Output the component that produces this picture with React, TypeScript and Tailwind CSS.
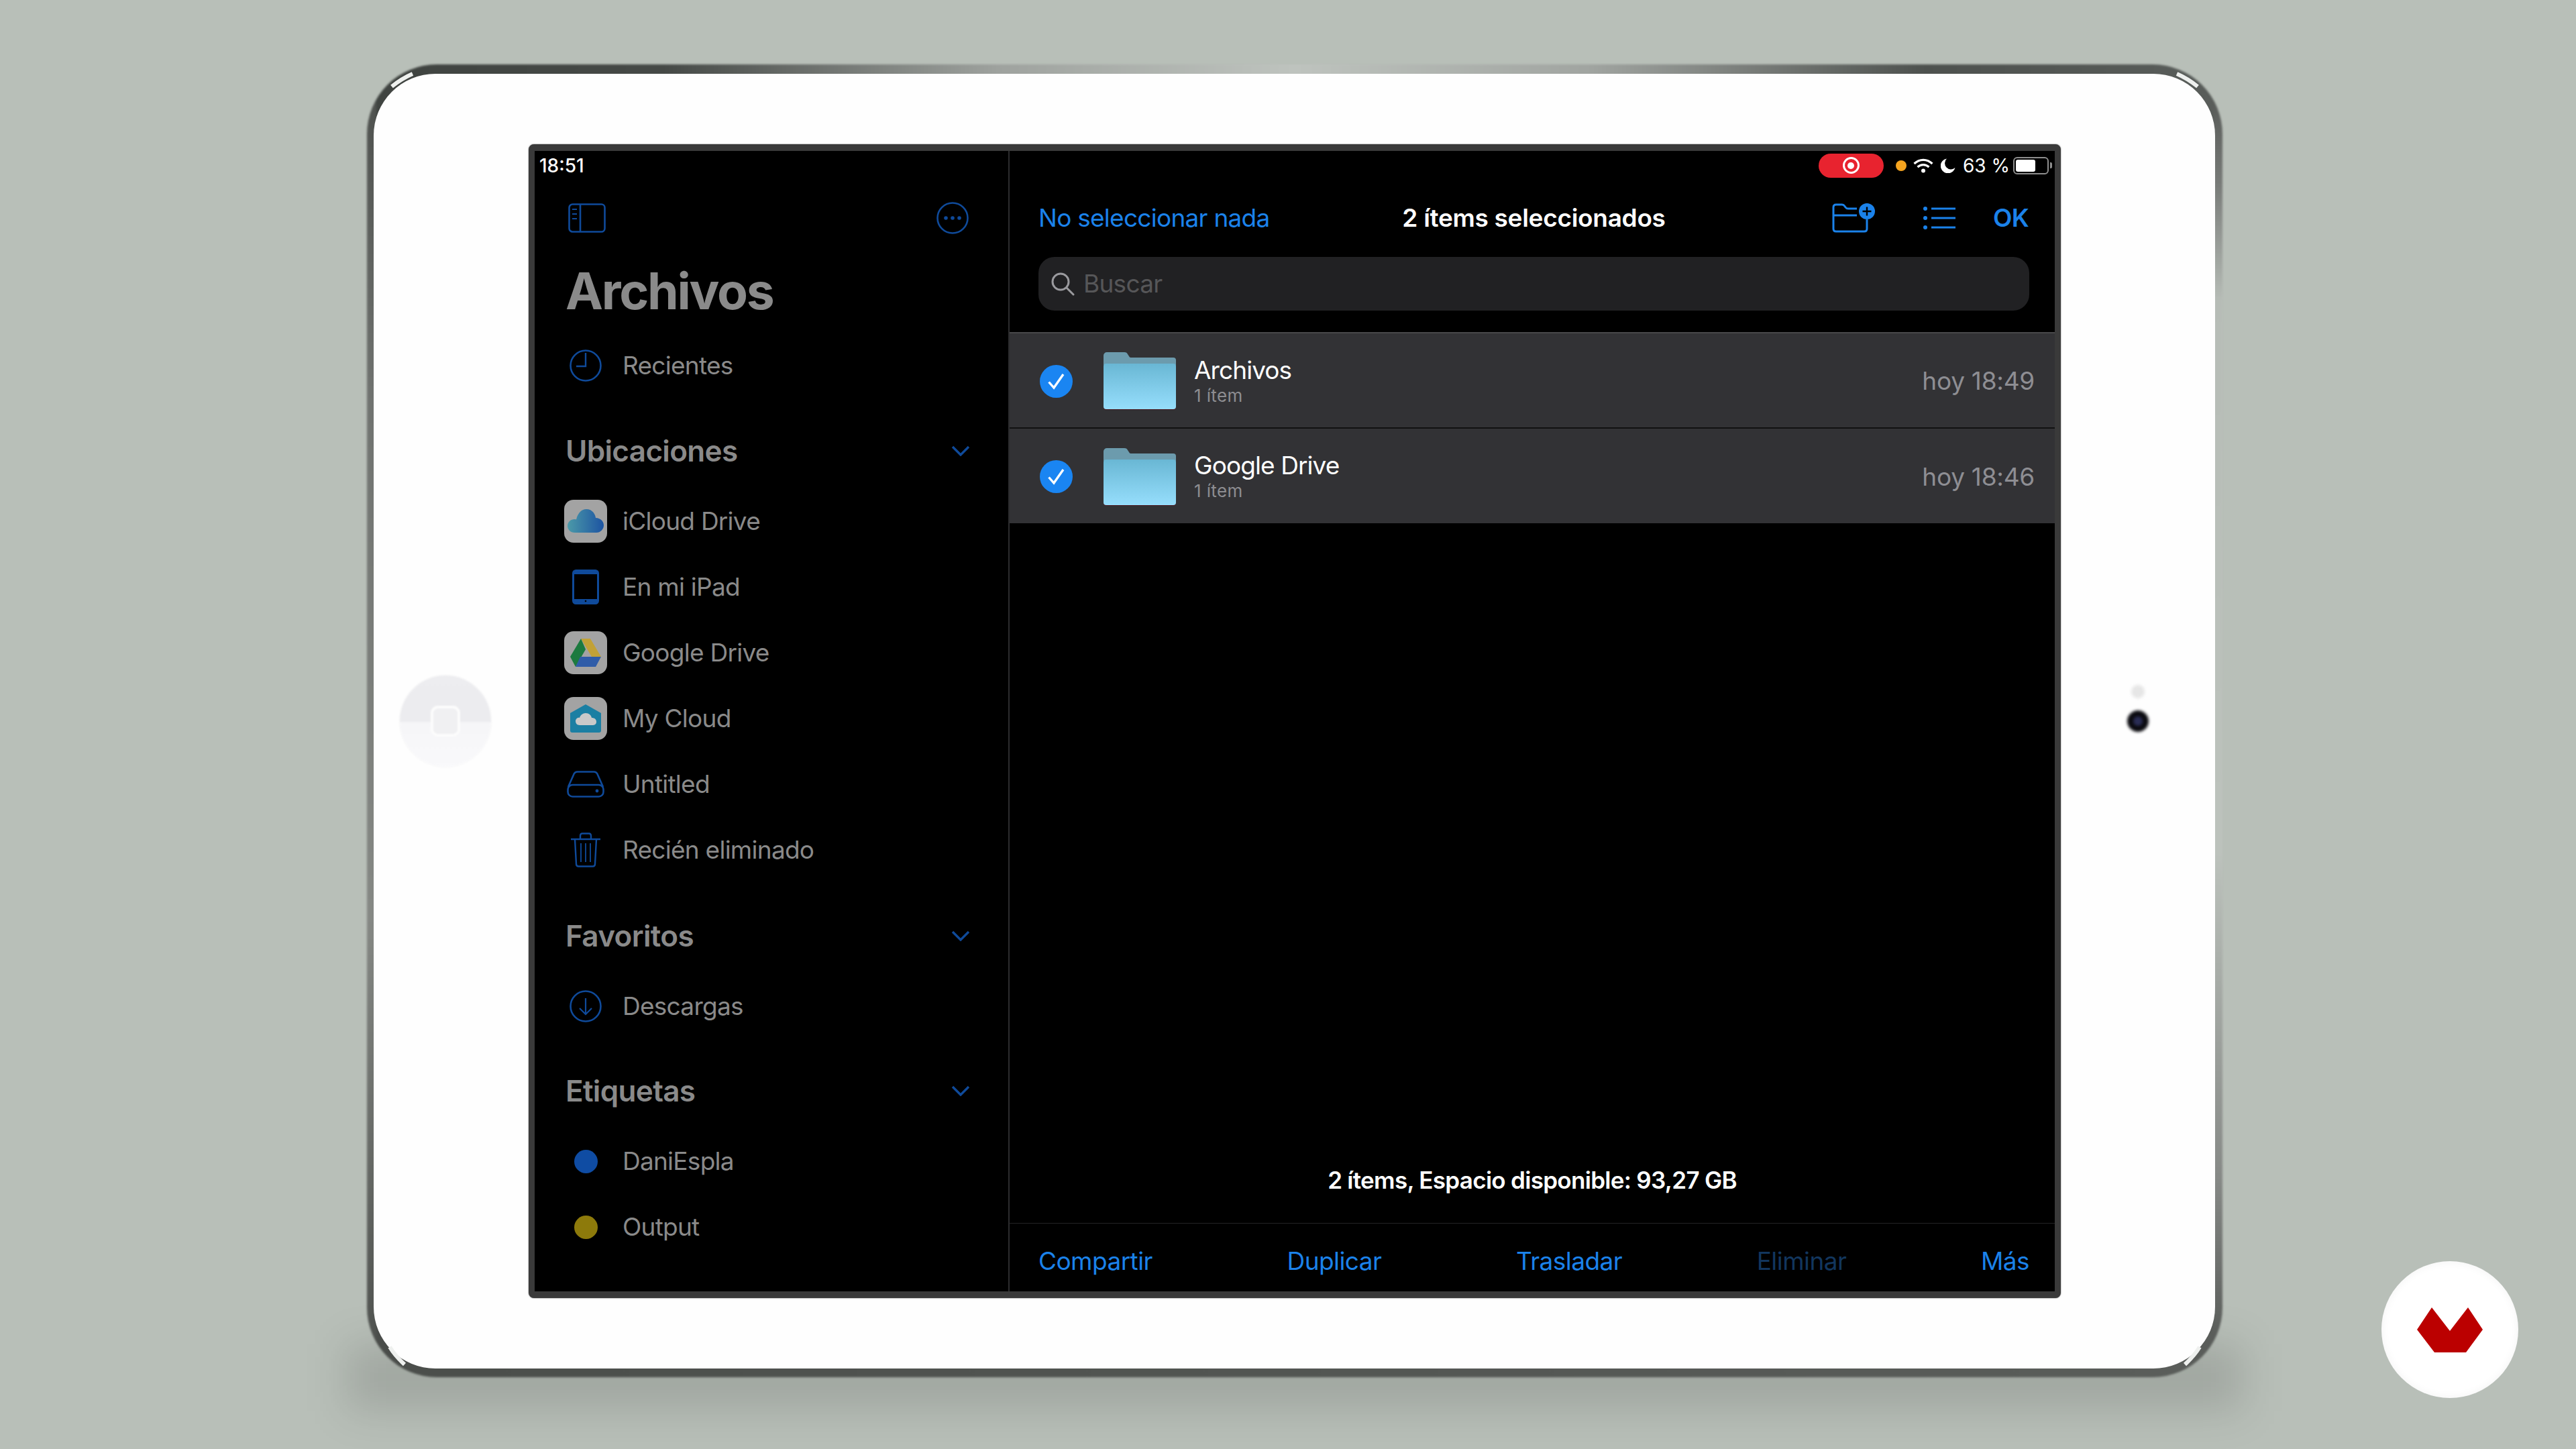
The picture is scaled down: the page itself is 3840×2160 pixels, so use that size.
import { ReactNode } from "react";

const rowText = "text-[37px] tracking-[-0.02em] text-[#8a8a8a]";
const toolbarText = "text-[37px] tracking-[-0.02em] text-[#1b82ea]";
const footerText = "text-[37px] tracking-[-0.015em] text-[#1b82ea]";

function SidebarIcon() {
  return (
    <svg width="56" height="44" viewBox="0 0 56 44" fill="none" stroke="#0f4a9a" strokeWidth="2.6">
      <rect x="1.5" y="1.5" width="53" height="41" rx="5" />
      <path d="M18 1.5v41" />
      <path d="M6 9h7M6 16h7M6 23h7" strokeWidth="2" />
    </svg>
  );
}

function MoreIcon() {
  return (
    <svg width="48" height="48" viewBox="0 0 48 48" fill="none" stroke="#0f4a9a" strokeWidth="2.6">
      <circle cx="24" cy="24" r="22.5" />
      <circle cx="14" cy="24" r="2.8" fill="#0f4a9a" stroke="none" />
      <circle cx="24" cy="24" r="2.8" fill="#0f4a9a" stroke="none" />
      <circle cx="34" cy="24" r="2.8" fill="#0f4a9a" stroke="none" />
    </svg>
  );
}

function ClockIcon() {
  return (
    <svg width="48" height="48" viewBox="0 0 48 48" fill="none" stroke="#0f4a9a" strokeWidth="2.6">
      <circle cx="24" cy="24" r="22.5" />
      <path d="M24 5v20H10" strokeWidth="2.4" />
    </svg>
  );
}

function DownloadIcon() {
  return (
    <svg width="48" height="48" viewBox="0 0 48 48" fill="none" stroke="#0f4a9a" strokeWidth="2.6">
      <circle cx="24" cy="24" r="22.5" />
      <path d="M24 12v24M15 27l9 9 9-9" strokeWidth="2.2" />
    </svg>
  );
}

function Chevron() {
  return (
    <svg width="28" height="16" viewBox="0 0 28 16" fill="none" stroke="#0f4a9a" strokeWidth="3.4">
      <path d="M2 2l12 12L26 2" />
    </svg>
  );
}

function Tile({ children }: { children: ReactNode }) {
  return (
    <div className="flex h-[64px] w-[64px] items-center justify-center rounded-[14px] bg-[#a3a3a3]">
      {children}
    </div>
  );
}

function ICloudIcon() {
  return (
    <Tile>
      <svg width="54" height="36" viewBox="0 0 54 36">
        <defs>
          <linearGradient id="cloud" x1="0" y1="0" x2="1" y2="0">
            <stop offset="0" stopColor="#4b99a8" />
            <stop offset="1" stopColor="#1d54a2" />
          </linearGradient>
        </defs>
        <path
          d="M11 35C4 35 0 30 0 25c0-6 5-10 10-10 1 0 2 0 3 .5C15 6 21 0 28 0c8 0 13 6 14 13 7 0 12 5 12 11 0 6-5 11-11 11Z"
          fill="url(#cloud)"
        />
      </svg>
    </Tile>
  );
}

function DriveIcon() {
  return (
    <Tile>
      <svg width="46" height="42" viewBox="0 0 46 42">
        <path d="M16 0h14l16 27H32Z" fill="#c2a136" />
        <path d="M16 0 0 27l8 15 15-26Z" fill="#1c7a3f" />
        <path d="M15 27h31l-8 15H8Z" fill="#2f5ca8" />
      </svg>
    </Tile>
  );
}

function MyCloudIcon() {
  return (
    <Tile>
      <svg width="46" height="42" viewBox="0 0 46 42">
        <path d="M23 0 46 13v26a3 3 0 0 1-3 3H3a3 3 0 0 1-3-3V13Z" fill="#1b7fa3" />
        <path
          d="M14 31c-4 0-6-3-6-6s3-6 6-5c1-4 5-7 9-7 5 0 8 3 9 7 4 0 7 2 7 6s-3 5-6 5Z"
          fill="#c9c9c9"
        />
      </svg>
    </Tile>
  );
}

function IPadIcon() {
  return (
    <svg width="40" height="52" viewBox="0 0 40 52" fill="none">
      <rect x="1.5" y="1.5" width="37" height="49" rx="4" stroke="#0f4a9a" strokeWidth="3" />
      <rect x="2" y="2" width="36" height="5" fill="#0f4a9a" />
      <rect x="2" y="44" width="36" height="6" fill="#0f4a9a" />
      <circle cx="20" cy="47" r="1.3" fill="#000" />
    </svg>
  );
}

function DriveDiskIcon() {
  return (
    <svg width="56" height="40" viewBox="0 0 56 40" fill="none" stroke="#0f4a9a" strokeWidth="2.6">
      <path d="M2 24 10 6c1-3 3-4.500 6-4.500h24c3 0 5 1.500 6 4.500l8 18" />
      <rect x="1.500" y="21" width="53" height="17.500" rx="7" />
      <circle cx="45" cy="30" r="2.400" fill="#0f4a9a" stroke="none" />
    </svg>
  );
}

function TrashIcon() {
  return (
    <svg width="46" height="52" viewBox="0 0 46 52" fill="none" stroke="#0f4a9a" strokeWidth="2.4">
      <path d="M1 10h44" />
      <path d="M15 10V5c0-2 1-3.500 3-3.500h10c2 0 3 1.500 3 3.500v5" />
      <path d="M7 10l2 37c0 2.500 1.500 3.500 3.500 3.500h21c2 0 3.500-1 3.500-3.500l2-37" />
      <path d="M16 16v28M23 16v28M30 16v28" strokeWidth="1.800" />
    </svg>
  );
}

function TagDot({ color }: { color: string }) {
  return <span className={`h-[35px] w-[35px] rounded-full ${color}`} />;
}

function SidebarRow({ icon, label }: { icon: ReactNode; label: string }) {
  return (
    <div className="flex h-[98px] items-center gap-[23px] pl-[44px]">
      <div className="flex w-[64px] justify-center">{icon}</div>
      <span className={rowText}>{label}</span>
    </div>
  );
}

function SectionHeader({ title, className }: { title: string; className: string }) {
  return (
    <div className={`flex h-[98px] items-center justify-between pl-[46px] pr-[57px] ${className}`}>
      <span className="text-[44px] font-semibold tracking-[-0.015em] text-[#8a8a8a]">{title}</span>
      <Chevron />
    </div>
  );
}

function Sidebar() {
  return (
    <aside className="flex w-[708px] shrink-0 flex-col border-r-2 border-[#2c2c2e]">
      <div className="flex h-[43px] items-center pl-[7px] text-[28px] font-medium text-white">18:51</div>
      <div className="flex h-[114px] items-center justify-between pl-[50px] pr-[59px]">
        <SidebarIcon />
        <MoreIcon />
      </div>
      <div className="flex h-[104px] items-center pl-[46px] text-[75px] font-bold tracking-[-0.03em] text-[#8a8a8a]">
        Archivos
      </div>
      <div className="mt-[10px]">
        <SidebarRow icon={<ClockIcon />} label="Recientes" />
      </div>
      <SectionHeader title="Ubicaciones" className="mt-[29px]" />
      <div className="mt-[7px]">
        <SidebarRow icon={<ICloudIcon />} label="iCloud Drive" />
        <SidebarRow icon={<IPadIcon />} label="En mi iPad" />
        <SidebarRow icon={<DriveIcon />} label="Google Drive" />
        <SidebarRow icon={<MyCloudIcon />} label="My Cloud" />
        <SidebarRow icon={<DriveDiskIcon />} label="Untitled" />
        <SidebarRow icon={<TrashIcon />} label="Recién eliminado" />
      </div>
      <SectionHeader title="Favoritos" className="mt-[30px]" />
      <div className="mt-[7px]">
        <SidebarRow icon={<DownloadIcon />} label="Descargas" />
      </div>
      <SectionHeader title="Etiquetas" className="mt-[28px]" />
      <div className="mt-[7px]">
        <SidebarRow icon={<TagDot color="bg-[#0f4ca3]" />} label="DaniEspla" />
        <SidebarRow icon={<TagDot color="bg-[#8d7a0b]" />} label="Output" />
      </div>
    </aside>
  );
}

function WifiIcon() {
  return (
    <svg width="30" height="22" viewBox="0 0 30 22" fill="none" stroke="#fff" strokeWidth="3.200">
      <path d="M1.500 8c8-7.500 19-7.500 27 0" />
      <path d="M6.500 13c5-4.500 12-4.500 17 0" />
      <circle cx="15" cy="18.500" r="3" fill="#fff" stroke="none" />
    </svg>
  );
}

function MoonIcon() {
  return (
    <svg width="22" height="22" viewBox="0 0 22 22">
      <path d="M9 0.500A11 11 0 1 0 21.500 14 9 9 0 0 1 9 0.500Z" fill="#fff" />
    </svg>
  );
}

function Battery() {
  return (
    <div className="flex items-center gap-[2px]">
      <div className="h-[26px] w-[53px] rounded-[6px] border-2 border-[#8e8e8e] p-[2px]">
        <div className="h-full w-[29px] rounded-[3px] bg-white" />
      </div>
      <span className="h-[9px] w-[3px] rounded-r-[2px] bg-[#8e8e8e]" />
    </div>
  );
}

function StatusBar() {
  return (
    <div className="flex h-[43px] items-center justify-end pr-[4px]">
      <div className="flex h-[36px] w-[97px] items-center justify-center rounded-full bg-[#e8232f]">
        <span className="flex h-[25px] w-[25px] items-center justify-center rounded-full border-[3px] border-white">
          <span className="h-[10px] w-[10px] rounded-full bg-white" />
        </span>
      </div>
      <span className="ml-[18px] h-[16px] w-[16px] rounded-full bg-[#f5a41f]" />
      <span className="ml-[10px] flex">
        <WifiIcon />
      </span>
      <span className="ml-[11px] flex">
        <MoonIcon />
      </span>
      <span className="ml-[11px] text-[28px] text-white">63 %</span>
      <span className="ml-[5px]">
        <Battery />
      </span>
    </div>
  );
}

function NewFolderIcon() {
  return (
    <svg width="64" height="44" viewBox="0 0 64 44" fill="none" stroke="#1b82ea" strokeWidth="3">
      <path d="M2 14V6c0-2.500 1.500-4 4-4h9c2 0 3 1 4 2.500l1 1.500c1 1.500 2 2 4 2h13" />
      <path d="M2 18h35" />
      <path d="M2 14v24c0 2.500 1.500 4 4 4h42c2.500 0 4-1.500 4-4V24" />
      <circle cx="52" cy="12" r="12" fill="#1b82ea" stroke="none" />
      <path d="M52 5.500v13M45.500 12h13" stroke="#000" strokeWidth="2.400" />
    </svg>
  );
}

function ListIcon() {
  return (
    <svg width="48" height="34" viewBox="0 0 48 34" fill="none" stroke="#1b82ea" strokeWidth="3">
      <path d="M12 3h36M12 17h36M12 31h36" />
      <circle cx="3" cy="3" r="3" fill="#1b82ea" stroke="none" />
      <circle cx="3" cy="17" r="3" fill="#1b82ea" stroke="none" />
      <circle cx="3" cy="31" r="3" fill="#1b82ea" stroke="none" />
    </svg>
  );
}

function SearchIcon() {
  return (
    <svg width="36" height="36" viewBox="0 0 36 36" fill="none" stroke="#9a9a9e" strokeWidth="3">
      <circle cx="15" cy="15" r="12" />
      <path d="M24 24l10 10" strokeLinecap="round" />
    </svg>
  );
}

function CheckCircle() {
  return (
    <svg width="49" height="49" viewBox="0 0 49 49">
      <circle cx="24.500" cy="24.500" r="24.500" fill="#1a85f2" />
      <path d="M13.500 25.500l7.500 8.500 14-20" fill="none" stroke="#fff" strokeWidth="3.400" />
    </svg>
  );
}

function FolderIcon({ id }: { id: string }) {
  return (
    <svg width="108" height="86" viewBox="0 0 108 86">
      <defs>
        <linearGradient id={id} x1="0" y1="0" x2="0" y2="1">
          <stop offset="0" stopColor="#69b7d4" />
          <stop offset="1" stopColor="#96defc" />
        </linearGradient>
      </defs>
      <path
        d="M0 5a5 5 0 0 1 5-5h26c3 0 4 1 5 3l2 3c1 2 2 2 4 2h62a4 4 0 0 1 4 4v30H0Z"
        fill="#6c9bad"
      />
      <rect x="0" y="18" width="108" height="68" rx="4" fill="#4a1820" />
      <path d="M0 21a4 4 0 0 1 4-4h100a4 4 0 0 1 4 4v60a4 4 0 0 1-4 4H4a4 4 0 0 1-4-4Z" fill={`url(#${id})`} />
    </svg>
  );
}

function FileRow({ id, name, time, className }: { id: string; name: string; time: string; className: string }) {
  return (
    <div className={`flex items-center bg-[#323235] pl-[45px] pr-[30px] pt-[2px] ${className}`}>
      <CheckCircle />
      <div className="ml-[46px] flex">
        <FolderIcon id={id} />
      </div>
      <div className="-mt-[2px] ml-[27px] flex flex-col">
        <span className="text-[37px] leading-[45px] tracking-[-0.025em] text-white">{name}</span>
        <span className="text-[26px] leading-[32px] tracking-[0.015em] text-[#8d8d91]">1 ítem</span>
      </div>
      <span className="ml-auto text-[37px] tracking-[-0.007em] text-[#8e8e93]">{time}</span>
    </div>
  );
}

function MainPane() {
  return (
    <main className="flex min-w-0 flex-1 flex-col">
      <StatusBar />
      <div className="relative flex h-[114px] items-center justify-between pl-[43px] pr-[39px]">
        <span className={toolbarText}>No seleccionar nada</span>
        <span className="absolute inset-x-0 pl-[5px] text-center text-[37px] font-semibold tracking-[-0.008em] text-white">
          2 ítems seleccionados
        </span>
        <div className="flex items-center">
          <NewFolderIcon />
          <span className="ml-[72px] flex">
            <ListIcon />
          </span>
          <span className="ml-[56px] text-[37px] font-semibold tracking-[-0.02em] text-[#1b82ea]">OK</span>
        </div>
      </div>
      <div className="ml-[43px] mr-[38px] mt-[1px] flex h-[80px] items-center rounded-[24px] bg-[#212123] pl-[18px]">
        <SearchIcon />
        <span className="ml-[13px] text-[37px] tracking-[-0.02em] text-[#565658]">Buscar</span>
      </div>
      <div className="mt-[32px] h-[2px] bg-[#48484a]" />
      <FileRow id="folderA" name="Archivos" time="hoy 18:49" className="h-[140px]" />
      <div className="h-[2px] bg-[#111]" />
      <FileRow id="folderB" name="Google Drive" time="hoy 18:46" className="h-[141px]" />
      <div className="flex-1" />
      <div className="flex h-[122px] items-center justify-center pb-[6px] text-[35px] font-semibold tracking-[-0.02em] text-white">
        2 ítems, Espacio disponible: 93,27 GB
      </div>
      <div className="flex h-[102px] items-center justify-between border-t border-[#232325] pl-[43px] pr-[38px] pt-[10px]">
        <span className={footerText}>Compartir</span>
        <span className={footerText}>Duplicar</span>
        <span className={footerText}>Trasladar</span>
        <span className="text-[37px] tracking-[-0.015em] text-[#12365e]">Eliminar</span>
        <span className={footerText}>Más</span>
      </div>
    </main>
  );
}

function HomeButton() {
  return (
    <div className="flex h-[136px] w-[136px] items-center justify-center rounded-full bg-[linear-gradient(180deg,#ededf0_0%,#ececef_50%,#f6f6f8_52%,#f9f9fb_100%)] shadow-[0_0_3px_rgba(0,0,0,0.06)] blur-[1px]">
      <div className="h-[46px] w-[44px] rounded-[11px] border-[4px] border-[#fcfcfc] bg-[#f0f0f2]" />
    </div>
  );
}

function Camera() {
  return (
    <div className="relative flex h-[32px] w-[32px] items-center justify-center rounded-full bg-[#0b0b10] blur-[2px]">
      <span className="absolute -top-[38px] h-[20px] w-[20px] rounded-full bg-[#e6e6e6]" />
      <span className="h-[14px] w-[14px] rounded-full bg-[#2a2d55]" />
    </div>
  );
}

function CornerGlints() {
  return (
    <svg
      className="pointer-events-none absolute inset-0"
      width="2766"
      height="1957"
      viewBox="0 0 2766 1957"
      fill="none"
      stroke="#eef0ee"
      strokeWidth="6"
    >
      <path d="M37 33Q52 21 68 14" />
      <path d="M2729 33Q2714 21 2698 14" />
      <path d="M34 1912Q42 1925 56 1938" />
      <path d="M2732 1912Q2724 1925 2710 1938" />
    </svg>
  );
}

export default function App() {
  return (
    <div className="relative h-[2160px] w-[3840px] overflow-hidden bg-[#b8bfb8] pl-[547px] pt-[96px] [font-family:Inter,sans-serif]">
      <div className="relative h-[1957px] w-[2766px] pb-[13px] pl-[10px] pr-[11px] pt-[14px]">
        {/* soft shadow the tablet drops on the backdrop */}
        <div className="absolute -inset-x-[30px] -bottom-[50px] h-[100px] bg-[rgba(0,0,0,0.12)] blur-[30px]" />
        {/* metal edge, blurred on its own layer so the screen stays sharp */}
        <div className="absolute inset-0 rounded-[104px] blur-[1.5px] [background:linear-gradient(180deg,#4a4d4a_0%,#6f726f_25%,#858884_65%,#4a4d4a_100%)_left/14px_100%_no-repeat,linear-gradient(180deg,#4a4d4a_0%,#777a77_9%,#b6bcb6_18%,#bcc2bc_60%,#858885_85%,#4f524f_100%)_right/14px_100%_no-repeat,linear-gradient(90deg,#3f4340_0%,#454946_16%,#9ea29e_34%,#bec3be_50%,#a0a4a0_66%,#4d514e_84%,#595d5a_100%)_top/100%_50%_no-repeat,linear-gradient(90deg,#4a4d4a,#5a5d5a)_bottom/100%_50%_no-repeat]" />
        <div className="relative flex h-full items-center rounded-[92px] bg-[#fefefe]">
          <div className="flex w-[231px] shrink-0 justify-start pl-[39px]">
            <HomeButton />
          </div>
          <div className="flex h-[1720px] w-[2284px] shrink-0 overflow-hidden rounded-[8px] border-[9px] border-y-[10px] border-[#3a3a3a] bg-black shadow-[0_0_2px_rgba(0,0,0,0.6)]">
            <Sidebar />
            <MainPane />
          </div>
          <div className="flex flex-1 justify-center">
            <Camera />
          </div>
        </div>
        <CornerGlints />
      </div>

      <div className="absolute left-[3550px] top-[1880px] flex h-[204px] w-[204px] items-center justify-center rounded-full bg-white shadow-[inset_0_0_14px_rgba(0,0,0,0.05)]">
        <svg width="98" height="67" viewBox="0 0 98 67">
          <path d="M22 0l27 35L76 0l22 33-25 34H26L0 33Z" fill="#bb0000" />
        </svg>
      </div>
    </div>
  );
}
